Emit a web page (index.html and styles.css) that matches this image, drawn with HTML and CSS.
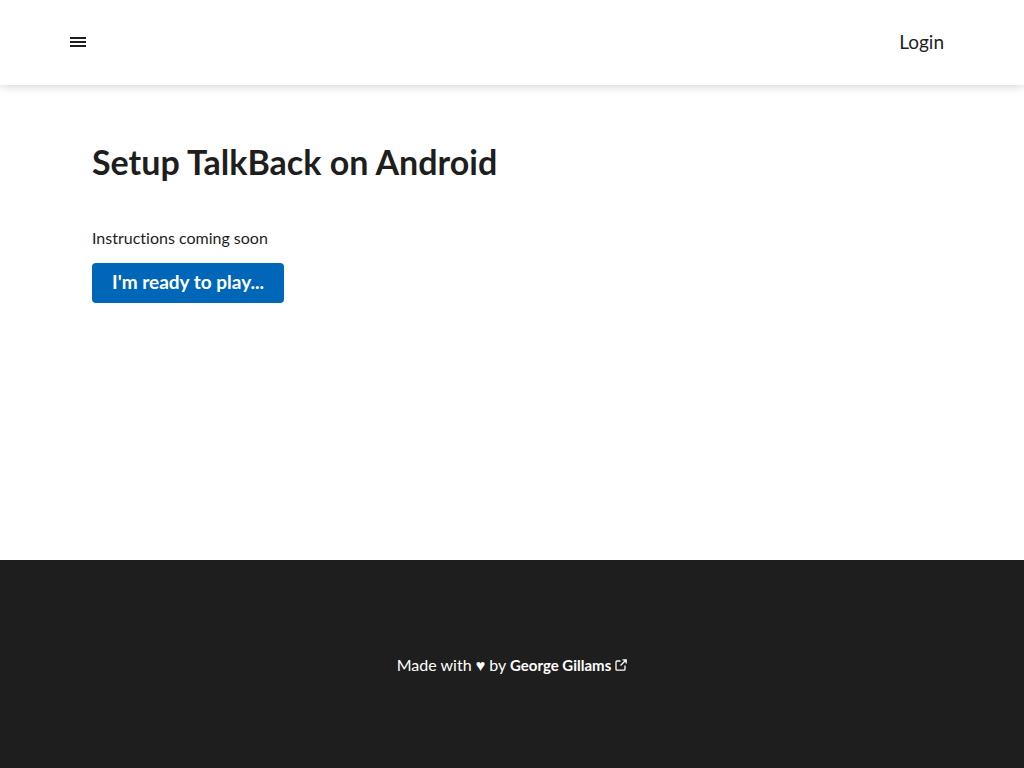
FILE: index.html
```html
<!DOCTYPE html>
<html lang="en">
<head>
<meta charset="utf-8">
<meta name="viewport" content="width=device-width, initial-scale=1">
<title>Setup TalkBack on Android</title>
<link rel="stylesheet" href="styles.css">
</head>
<body>
<header class="header">
  <button class="menu" type="button" aria-label="Menu">
    <svg width="24" height="24" viewBox="0 0 24 24" fill="currentColor" aria-hidden="true"><path d="M4 7h16v2H4zM4 11h16v2H4zM4 15h16v2H4z"/></svg>
  </button>
  <a class="login" href="#">Login</a>
</header>
<main class="main">
  <h1 class="title">Setup TalkBack on Android</h1>
  <p class="text">Instructions coming soon</p>
  <button class="play" type="button">I'm ready to play...</button>
</main>
<footer class="footer">
  <p class="credit">Made with ♥ by <a class="author" href="#">George Gillams<svg class="external" width="12" height="12" viewBox="0 0 12 12" fill="none" stroke="currentColor" stroke-width="1.3" aria-hidden="true"><path d="M5.500 2H2Q1 2 1 3V10.200Q1 11.200 2 11.200H9Q10 11.200 10 10.200V6.500M7.500 .8H11.200V4.500M11 1 5.500 6.500"/></svg></a></p>
</footer>
</body>
</html>
```
FILE: styles.css
```css
* { box-sizing: border-box; }
body {
  margin: 0;
  min-height: 100vh;
  display: flex;
  flex-direction: column;
  background: #fff;
  color: #1e1e1e;
  font: 16px/24px Lato, sans-serif;
  font-variant-ligatures: none;
}
.header {
  display: flex;
  align-items: center;
  justify-content: space-between;
  padding: 24px 80px 26px 66px;
  min-height: 85px;
  box-shadow: 0 0 10px rgba(0, 0, 0, .22);
}
.menu {
  display: flex;
  padding: 0;
  border: 0;
  background: none;
  color: inherit;
}
.login { color: inherit; font-size: 19px; text-decoration: none; }
.main { flex: 1; padding: 55px 92px; }
.title { margin: 0 0 42px; font-size: 34px; line-height: 44px; font-weight: 700; }
.text { margin: 0 0 13px; }
.play {
  height: 40px;
  padding: 0 20px 2px;
  border: 0;
  border-radius: 4px;
  background: #0067b8;
  color: #fff;
  font: 700 19px/24px Lato, sans-serif;
}
.footer {
  display: flex;
  align-items: center;
  justify-content: center;
  min-height: 208px;
  padding: 26px 24px 24px;
  background: #1e1e1e;
  color: #fff;
}
.credit { margin: 0; }
.author { color: inherit; font-size: 15px; font-weight: 700; text-decoration: none; }
.external { margin-left: 4px; }
```
